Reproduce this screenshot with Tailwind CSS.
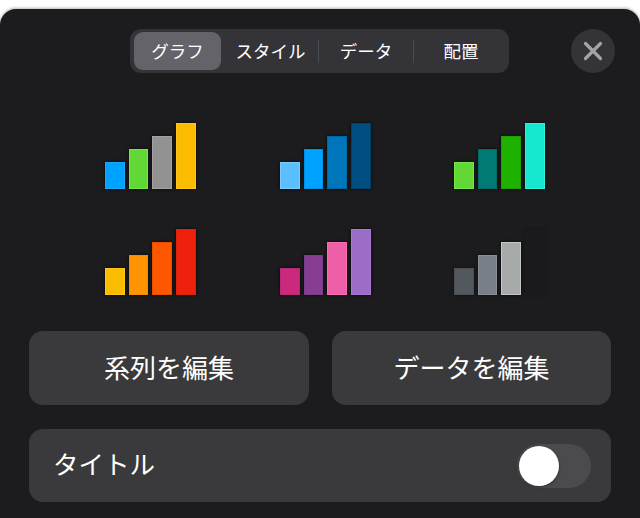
<!DOCTYPE html>
<html lang="ja">
<head>
  <meta charset="UTF-8" />
  <title>グラフ</title>
  <script src="https://cdn.jsdelivr.net/npm/@tailwindcss/browser@4"></script>
</head>
<body class="w-[640px] h-[518px] overflow-hidden bg-white font-['Inter','Noto_Sans_CJK_JP',sans-serif] text-white">
  <div class="mt-[9px] h-[509px] rounded-t-[16px] bg-[#1c1c1e] pt-[20px] shadow-[0_-1px_3px_rgba(0,0,0,0.3)]">

    <!-- tabs + close -->
    <div class="flex items-center pl-[130px]">
      <div class="flex h-[44px] w-[379px] items-center rounded-[11px] bg-[#333338] px-[4px] text-[17.5px]">
        <div class="flex h-[38px] w-[87px] items-center justify-center rounded-[9px] bg-[#636369] pt-[2px]">グラフ</div>
        <div class="flex h-[23px] w-[98px] items-center justify-center border-r border-[#4c4c52] pt-[2px] pl-[2px]">スタイル</div>
        <div class="flex h-[23px] w-[95px] items-center justify-center border-r border-[#4c4c52] pt-[2px]">データ</div>
        <div class="flex h-[23px] w-[91px] items-center justify-center pt-[2px] pl-[3px]">配置</div>
      </div>
      <div class="ml-[62px] flex h-[44px] w-[44px] items-center justify-center rounded-full bg-[#333338]">
        <svg width="20" height="20" viewBox="0 0 20 20" fill="none" stroke="#a3a3a8" stroke-width="3.2" stroke-linecap="round">
          <path d="M2.5 2.5 17.5 17.5M17.5 2.5 2.5 17.5" />
        </svg>
      </div>
    </div>

    <!-- chart styles -->
    <div class="mt-[50px] grid grid-cols-[175px_174px_91px] gap-y-[40px] pl-[105px]">
      <div class="flex h-[66px] w-[91px] items-end gap-[4px]">
        <div class="h-[27px] w-[20px] border border-[#19a8ff] bg-[#00a2ff] shadow-[0_0_3px_rgba(0,0,0,0.8)]"></div>
        <div class="h-[40px] w-[19px] border border-[#74e848] bg-[#61d836] shadow-[0_0_3px_rgba(0,0,0,0.8)]"></div>
        <div class="h-[53px] w-[20px] border border-[#a3a3a3] bg-[#929292] shadow-[0_0_3px_rgba(0,0,0,0.8)]"></div>
        <div class="h-[66px] w-[20px] border border-[#ffc71a] bg-[#fbbc00] shadow-[0_0_3px_rgba(0,0,0,0.8)]"></div>
      </div>
      <div class="flex h-[66px] w-[91px] items-end gap-[4px]">
        <div class="h-[27px] w-[20px] border border-[#7accff] bg-[#5bbfff] shadow-[0_0_3px_rgba(0,0,0,0.8)]"></div>
        <div class="h-[40px] w-[19px] border border-[#0091e6] bg-[#00a2ff] shadow-[0_0_3px_rgba(0,0,0,0.8)]"></div>
        <div class="h-[53px] w-[20px] border border-[#0066a6] bg-[#0076ba] shadow-[0_0_3px_rgba(0,0,0,0.8)]"></div>
        <div class="h-[66px] w-[20px] border border-[#00416e] bg-[#004d80] shadow-[0_0_3px_rgba(0,0,0,0.8)]"></div>
      </div>
      <div class="flex h-[66px] w-[91px] items-end gap-[4px]">
        <div class="h-[27px] w-[20px] border border-[#74e848] bg-[#61d836] shadow-[0_0_3px_rgba(0,0,0,0.8)]"></div>
        <div class="h-[40px] w-[19px] border border-[#006b63] bg-[#007a72] shadow-[0_0_3px_rgba(0,0,0,0.8)]"></div>
        <div class="h-[53px] w-[20px] border border-[#1ea000] bg-[#1fb100] shadow-[0_0_3px_rgba(0,0,0,0.8)]"></div>
        <div class="h-[66px] w-[20px] border border-[#2af5dc] bg-[#16e7cf] shadow-[0_0_3px_rgba(0,0,0,0.8)]"></div>
      </div>
      <div class="flex h-[66px] w-[91px] items-end gap-[4px]">
        <div class="h-[27px] w-[20px] border border-[#ffc71a] bg-[#fbbc00] shadow-[0_0_3px_rgba(0,0,0,0.8)]"></div>
        <div class="h-[40px] w-[19px] border border-[#f09000] bg-[#ff9300] shadow-[0_0_3px_rgba(0,0,0,0.8)]"></div>
        <div class="h-[53px] w-[20px] border border-[#e84e00] bg-[#ff5600] shadow-[0_0_3px_rgba(0,0,0,0.8)]"></div>
        <div class="h-[66px] w-[20px] border border-[#d9230c] bg-[#ee220c] shadow-[0_0_3px_rgba(0,0,0,0.8)]"></div>
      </div>
      <div class="flex h-[66px] w-[91px] items-end gap-[4px]">
        <div class="h-[27px] w-[20px] border border-[#b9287a] bg-[#cb297b] shadow-[0_0_3px_rgba(0,0,0,0.8)]"></div>
        <div class="h-[40px] w-[19px] border border-[#7a3d8a] bg-[#873e92] shadow-[0_0_3px_rgba(0,0,0,0.8)]"></div>
        <div class="h-[53px] w-[20px] border border-[#f76cb5] bg-[#ee5fa7] shadow-[0_0_3px_rgba(0,0,0,0.8)]"></div>
        <div class="h-[66px] w-[20px] border border-[#a878d2] bg-[#9c6dc6] shadow-[0_0_3px_rgba(0,0,0,0.8)]"></div>
      </div>
      <div class="flex h-[66px] w-[91px] items-end gap-[4px]">
        <div class="h-[27px] w-[20px] border border-[#4a4f55] bg-[#53585f] shadow-[0_0_3px_rgba(0,0,0,0.5)]"></div>
        <div class="h-[40px] w-[19px] border border-[#8a8f97] bg-[#797f88] shadow-[0_0_3px_rgba(0,0,0,0.6)]"></div>
        <div class="h-[53px] w-[20px] border border-[#c3c7c9] bg-[#a6aaa9] shadow-[0_0_3px_rgba(0,0,0,0.8)]"></div>
        <div class="h-[66px] w-[20px] border border-[#1c1c1e] bg-[#1a1a1c] shadow-[0_0_3px_rgba(0,0,0,0.4)]"></div>
      </div>
    </div>

    <!-- edit buttons -->
    <div class="mt-[36px] flex gap-[23px] pl-[29px] pr-[29px] text-[26px]">
      <div class="flex h-[74px] w-[280px] items-center justify-center rounded-[14px] bg-[#3a3a3c]">系列を編集</div>
      <div class="flex h-[74px] w-[279px] items-center justify-center rounded-[14px] bg-[#3a3a3c]">データを編集</div>
    </div>

    <!-- title toggle -->
    <div class="mx-[29px] mt-[24px] flex h-[73px] items-center justify-between rounded-[14px] bg-[#3a3a3c] pl-[24px] pr-[20px] text-[25.5px]">
      <span>タイトル</span>
      <div class="flex h-[44px] w-[74px] items-center rounded-full bg-[#4b4a4f] pl-[2px]">
        <div class="h-[40px] w-[40px] rounded-full bg-white shadow-[0_1px_3px_rgba(0,0,0,0.4)]"></div>
      </div>
    </div>
  </div>
</body>
</html>
